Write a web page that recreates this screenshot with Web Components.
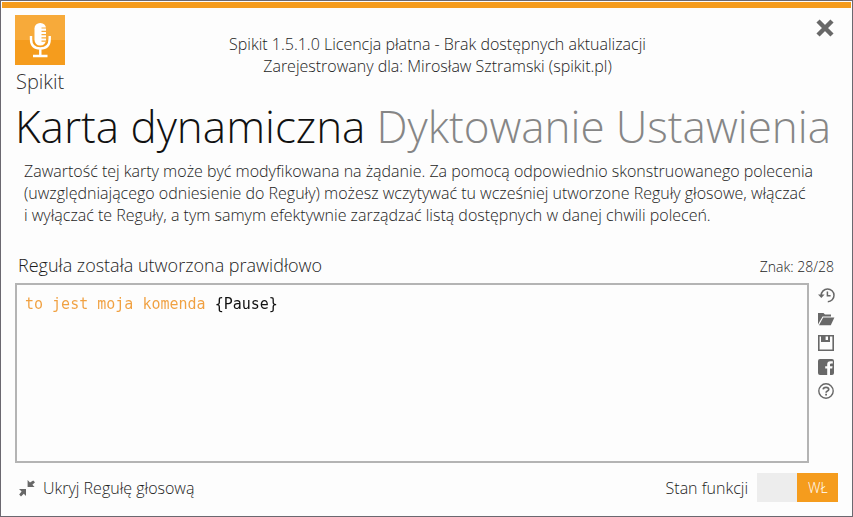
<!DOCTYPE html>
<html lang="pl">
<head>
<meta charset="utf-8">
<title>Spikit</title>
<style>
  html, body {
    margin: 0;
    height: 100%;
  }
  body {
    font: 300 16px/22px "Open Sans", "Noto Sans", sans-serif;
    color: #1c1c1c;
    background: #fdfdfd;
  }
</style>
</head>
<body>
<spikit-window>
  <spikit-brand slot="brand">Spikit</spikit-brand>
  <span slot="info">Spikit 1.5.1.0 Licencja płatna - Brak dostępnych aktualizacji</span>
  <span slot="info">Zarejestrowany dla: Mirosław Sztramski (spikit.pl)</span>
  <spikit-tabs>
    <spikit-tab selected>Karta dynamiczna</spikit-tab>
    <spikit-tab>Dyktowanie</spikit-tab>
    <spikit-tab>Ustawienia</spikit-tab>
  </spikit-tabs>
  <spikit-note>
    Zawartość tej karty może być modyfikowana na żądanie. Za pomocą odpowiednio skonstruowanego polecenia<br>
    (uwzględniającego odniesienie do Reguły) możesz wczytywać tu wcześniej utworzone Reguły głosowe, włączać<br>
    i wyłączać te Reguły, a tym samym efektywnie zarządzać listą dostępnych w danej chwili poleceń.
  </spikit-note>
  <rule-editor value="to jest moja komenda {Pause}">
    <span slot="status">Reguła została utworzona prawidłowo</span>
    <span slot="count">Znak: 28/28</span>
    <icon-button slot="tools" icon="history" label="Historia"></icon-button>
    <icon-button slot="tools" icon="folder" label="Otwórz"></icon-button>
    <icon-button slot="tools" icon="save" label="Zapisz"></icon-button>
    <icon-button slot="tools" icon="facebook" label="Facebook"></icon-button>
    <icon-button slot="tools" icon="help" label="Pomoc"></icon-button>
  </rule-editor>
  <icon-button slot="footer" icon="collapse">Ukryj Regułę głosową</icon-button>
  <spikit-switch slot="footer" state="WŁ" checked>Stan funkcji</spikit-switch>
</spikit-window>

<script>
const ICONS = {
  close: `<path d="M1.8 1.8 14.2 14.2M14.2 1.8 1.8 14.2" fill="none" stroke="currentColor" stroke-width="4"/>`,
  history: `<path d="M3.2 8.4A6.4 6.4 0 1 1 9.8 14.8" fill="none" stroke="currentColor" stroke-width="1.5"/>
    <path d="M0 7.6H6.6L3.3 11Z" fill="currentColor"/>
    <path d="M9.4 4.6V8.8H12.6" fill="none" stroke="currentColor" stroke-width="1.5"/>`,
  folder: `<path d="M0 13.5V2H5.5L7 3.6H13V5.6H4.6L1.4 11Z" fill="currentColor"/>
    <path d="M5.2 6.6H16.4L12.8 14.2H1Z" fill="currentColor"/>`,
  save: `<path d="M.8 .8H15.2V15.2H.8Z" fill="none" stroke="currentColor" stroke-width="1.6"/>
    <path d="M3 1V7H12V1H10V5H7.6V1Z" fill="currentColor"/>`,
  facebook: `<path fill-rule="evenodd" d="M2 0H14Q16 0 16 2V14Q16 16 14 16H12V9.6H14.2L14.6 7.2H12V5.6Q12 4.6 13.2 4.6H14.8V2.2H12.4Q9.2 2.2 9.2 5.4V7.2H7.2V9.6H9.2V16H2Q0 16 0 14V2Q0 0 2 0Z" fill="currentColor"/>`,
  help: `<circle cx="8" cy="8" r="7.2" fill="none" stroke="currentColor" stroke-width="1.4"/>
    <path d="M5.2 6.4Q5.4 4.4 8 4.4T10.7 6.4Q10.7 7.4 9.4 8T8.1 9.8" fill="none" stroke="currentColor" stroke-width="1.7"/>
    <path d="M7.2 10.8H9V12.4H7.2Z" fill="currentColor"/>`,
  collapse: `<path d="M0 9H7V16L4.8 13.8 2 16.4 .2 14.6 2.6 11.6Z" fill="currentColor"/>
    <path d="M8.6 0V7H15.6L13.4 4.8 16 2.2 14.2 .4 11 2.6Z" fill="currentColor"/>`
};

class SpikitWindow extends HTMLElement {
  constructor() {
    super();
    this.attachShadow({mode: 'open'});
    this.shadowRoot.innerHTML = `
      <style>
        :host {
          box-sizing: border-box;
          display: flex;
          flex-direction: column;
          min-height: 100%;
          padding: 1px;
          border: 1px solid #6b6870;
        }
        .bar {
          height: 6px;
          background: #f59c1d;
        }
        header {
          display: grid;
          grid-template-columns: 64px 1fr 42px;
          align-items: start;
          padding: 7px 13px 0;
        }
        .info {
          display: flex;
          flex-direction: column;
          align-items: center;
          padding-top: 18px;
        }
        .close {
          justify-self: end;
          padding: 4px 4px 0 0;
          --icon-size: 18px;
        }
        main {
          flex: 1;
          display: flex;
          flex-direction: column;
          padding: 0 13px;
        }
        footer {
          display: flex;
          justify-content: space-between;
          align-items: center;
          padding: 10px 13px 13px;
        }
      </style>
      <div class="bar"></div>
      <header>
        <slot name="brand"></slot>
        <div class="info"><slot name="info"></slot></div>
        <icon-button class="close" icon="close" label="Zamknij"></icon-button>
      </header>
      <main><slot></slot></main>
      <footer><slot name="footer"></slot></footer>
    `;
  }
}

class SpikitBrand extends HTMLElement {
  constructor() {
    super();
    this.attachShadow({mode: 'open'});
    this.shadowRoot.innerHTML = `
      <style>
        :host {
          display: flex;
          flex-direction: column;
          align-items: start;
          font-size: 20px;
          line-height: 34px;
          color: #333;
        }
        svg {
          width: 50px;
          height: 50px;
          background: linear-gradient(#f7aa3a 50%, #f59c1d 50%);
        }
        span {
          padding-left: 1px;
        }
      </style>
      <svg viewBox="0 0 50 50" aria-hidden="true">
        <rect x="19.5" y="8" width="11.5" height="22.5" rx="5.5" fill="#fff"/>
        <path d="M26.5 13H32M26.5 16.3H32M26.5 19.6H32M26.5 22.9H32M26.5 26.2H32" stroke="#f7aa3a" stroke-width="1.2"/>
        <path d="M16 21V24Q16 33.5 25.3 33.5T34.7 24V21M25.3 33V41M18 41H32.5" fill="none" stroke="#fff" stroke-width="2.4"/>
      </svg>
      <span><slot></slot></span>
    `;
  }
}

class SpikitTabs extends HTMLElement {
  constructor() {
    super();
    this.attachShadow({mode: 'open'});
    this.shadowRoot.innerHTML = `
      <style>
        :host {
          display: block;
        }
        nav {
          display: flex;
          gap: 11px;
        }
      </style>
      <nav><slot></slot></nav>
    `;
    this.addEventListener('click', (event) => {
      const tab = event.target.closest('spikit-tab');
      if (!tab) return;
      for (const item of this.querySelectorAll('spikit-tab'))
        item.toggleAttribute('selected', item === tab);
    });
  }
}

class SpikitTab extends HTMLElement {
  constructor() {
    super();
    this.attachShadow({mode: 'open'});
    this.shadowRoot.innerHTML = `
      <style>
        :host {
          display: block;
        }
        button {
          display: block;
          padding: 0;
          border: 0;
          background: none;
          font: inherit;
          font-size: 44px;
          line-height: 54px;
          white-space: nowrap;
          color: #868686;
          cursor: pointer;
        }
        :host([selected]) button {
          color: #111;
        }
      </style>
      <button type="button"><slot></slot></button>
    `;
  }
}

class SpikitNote extends HTMLElement {
  constructor() {
    super();
    this.attachShadow({mode: 'open'});
    this.shadowRoot.innerHTML = `
      <style>
        :host {
          display: block;
          padding: 7px 9px 0;
        }
        p {
          margin: 0;
        }
      </style>
      <p><slot></slot></p>
    `;
  }
}

class RuleEditor extends HTMLElement {
  constructor() {
    super();
    this.attachShadow({mode: 'open'});
    this.shadowRoot.innerHTML = `
      <style>
        :host {
          flex: 1;
          display: grid;
          grid-template-columns: 1fr 16px;
          grid-template-rows: auto 1fr;
          column-gap: 9px;
          padding: 27px 4px 0 0;
        }
        .head {
          grid-column: 1 / -1;
          display: flex;
          justify-content: space-between;
          align-items: baseline;
          padding: 0 0 4px 3px;
          font-size: 18px;
          line-height: 24px;
        }
        .count {
          font-size: 14px;
        }
        textarea {
          --split: 0ch;
          box-sizing: border-box;
          width: 100%;
          min-height: 120px;
          height: 100%;
          margin: 0;
          padding: 8px;
          border: 2px solid #b4b4b4;
          border-radius: 0;
          outline: 0;
          resize: none;
          font: 15px/22px "DejaVu Sans Mono", monospace;
          color: transparent;
          caret-color: #111;
          background: linear-gradient(to right, #f0a040 calc(8px + var(--split)), #111 0);
          -webkit-background-clip: text;
          background-clip: text;
        }
        .tools {
          display: flex;
          flex-direction: column;
          gap: 8px;
          padding-top: 4px;
        }
      </style>
      <div class="head">
        <label for="rule"><slot name="status"></slot></label>
        <span class="count"><slot name="count"></slot></span>
      </div>
      <textarea id="rule" spellcheck="false"></textarea>
      <div class="tools"><slot name="tools"></slot></div>
    `;
    this.input = this.shadowRoot.getElementById('rule');
    this.input.addEventListener('input', () => this.paint());
  }

  connectedCallback() {
    this.input.value = this.getAttribute('value') || '';
    this.paint();
  }

  // Spoken words are orange, the key in braces is black.
  paint() {
    const text = this.input.value;
    const brace = text.indexOf('{');
    const split = brace < 0 ? text.length : brace;
    this.input.style.setProperty('--split', `${split}ch`);
  }
}

class IconButton extends HTMLElement {
  constructor() {
    super();
    this.attachShadow({mode: 'open'});
  }

  connectedCallback() {
    const icon = this.getAttribute('icon');
    const label = this.getAttribute('label');
    this.shadowRoot.innerHTML = `
      <style>
        :host {
          display: block;
        }
        button {
          display: flex;
          align-items: center;
          gap: 8px;
          padding: 0;
          border: 0;
          background: none;
          font: inherit;
          color: inherit;
          cursor: pointer;
        }
        :host([icon="collapse"]) {
          padding-left: 4px;
        }
        svg {
          width: var(--icon-size, 16px);
          height: var(--icon-size, 16px);
          color: #686868;
          overflow: visible;
        }
      </style>
      <button type="button" ${label ? `aria-label="${label}"` : ''}>
        <svg viewBox="0 0 16 16" aria-hidden="true">${ICONS[icon]}</svg>
        <slot></slot>
      </button>
    `;
  }
}

class SpikitSwitch extends HTMLElement {
  constructor() {
    super();
    this.attachShadow({mode: 'open'});
  }

  connectedCallback() {
    this.shadowRoot.innerHTML = `
      <style>
        :host {
          display: block;
        }
        label {
          display: flex;
          align-items: center;
          gap: 9px;
        }
        .track {
          display: grid;
          grid-template-columns: 1fr 1fr;
          width: 81px;
          height: 29px;
        }
        input {
          grid-area: 1 / 1 / 2 / 3;
          appearance: none;
          margin: 0;
          background: #ededed;
          cursor: pointer;
        }
        input:checked {
          background: linear-gradient(to right, #ededed 50%, #f59c1d 50%);
        }
        .state {
          grid-area: 1 / 2;
          place-self: center;
          font-size: 14px;
          color: #fff;
          pointer-events: none;
        }
      </style>
      <label>
        <slot></slot>
        <span class="track">
          <input type="checkbox" role="switch" ${this.hasAttribute('checked') ? 'checked' : ''}>
          <span class="state">${this.getAttribute('state')}</span>
        </span>
      </label>
    `;
  }
}

customElements.define('spikit-window', SpikitWindow);
customElements.define('spikit-brand', SpikitBrand);
customElements.define('spikit-tabs', SpikitTabs);
customElements.define('spikit-tab', SpikitTab);
customElements.define('spikit-note', SpikitNote);
customElements.define('rule-editor', RuleEditor);
customElements.define('icon-button', IconButton);
customElements.define('spikit-switch', SpikitSwitch);
</script>
</body>
</html>
